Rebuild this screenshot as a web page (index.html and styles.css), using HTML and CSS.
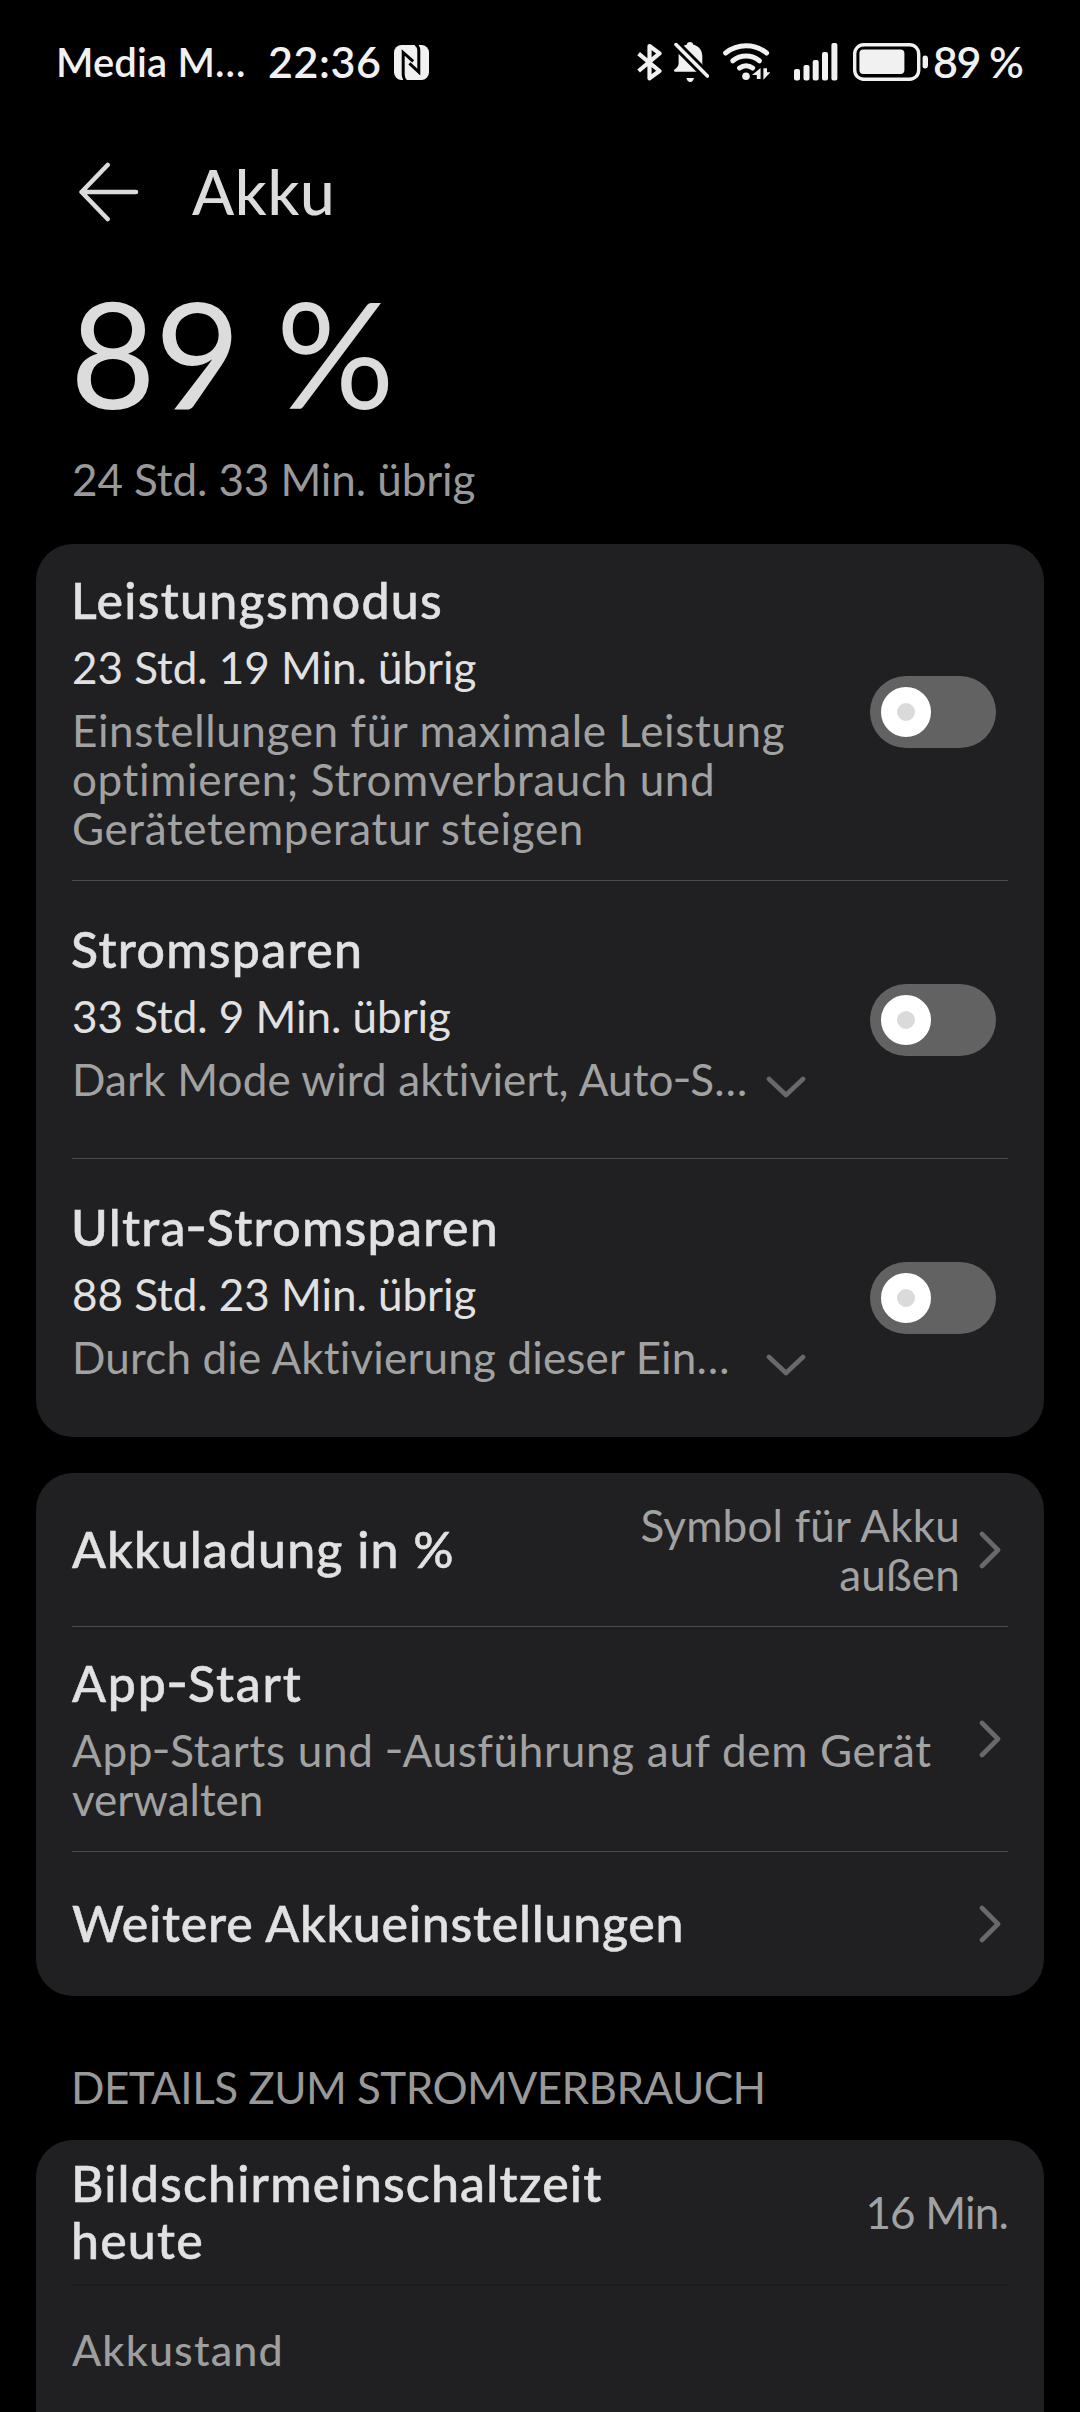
FILE: index.html
```html
<!DOCTYPE html>
<html lang="de">
<head>
<meta charset="utf-8">
<title>Akku</title>
<link rel="stylesheet" href="styles.css">
</head>
<body>
<div class="statusbar">
  <span class="carrier">Media M…</span>
  <span class="clock">22:36</span>
  <svg class="nfc" width="35" height="35" viewBox="0 0 35 35">
    <rect width="35" height="35" rx="7.5" fill="#f1f1f1"/>
    <path d="M12 36 Q9.200 33.500 9.200 29.500 V7.500 L19.200 16.400" fill="none" stroke="#000" stroke-width="3"/>
    <path d="M21.600 -1 Q24.800 1.600 24.800 5.500 V27 L15.400 18.400" fill="none" stroke="#000" stroke-width="3"/>
  </svg>
  <div class="indicators">
    <svg class="bluetooth" width="25" height="39" viewBox="0 0 25 39">
      <path d="M1.6 10.6 L22.5 28 L12.5 35.2 V3 L22.5 10.4 L1.6 28" fill="none" stroke="#f1f1f1" stroke-width="4.2" stroke-linejoin="round"/>
    </svg>
    <svg class="bell" width="35" height="41" viewBox="0 0 35 41">
      <path d="M16 0 C14 0 13 1 12.9 2.5 C7 4 4.6 8.5 4.6 14 V21.5 Q4.4 25 .4 27.6 Q-.4 29.6 1 29.8 H31 Q32.6 29.4 31.6 27.6 Q28.4 25 28.3 21.5 V14 C28.3 8.5 25 4 19.2 2.5 C19 1 18 0 16 0Z" fill="#f1f1f1"/>
      <path d="M12.4 36 H20 Q19 40 16.2 40 Q13.4 40 12.4 36Z" fill="#f1f1f1"/>
      <path d="M-3 -2.4 L37 37.6" stroke="#000" stroke-width="9.4"/>
      <path d="M2 2.6 L33.4 34" stroke="#f1f1f1" stroke-width="3.6" stroke-linecap="round"/>
    </svg>
    <svg class="wifi" width="47" height="39" viewBox="0 0 47 39">
      <g fill="none" stroke="#f1f1f1" stroke-width="5" stroke-linecap="round">
        <path d="M2.6 10 A33 33 0 0 1 43.6 10"/>
        <path d="M9.8 17.8 A21 21 0 0 1 36.4 17.8"/>
        <path d="M16.6 25 A11 11 0 0 1 29.6 25"/>
      </g>
      <circle cx="23" cy="33.2" r="3.8" fill="#f1f1f1"/>
      <path d="M37.6 25 V36 H33.8 V32 H29 Z M40.4 36.8 V25.2 H44 V29.2 H47.6 Z" fill="#f1f1f1"/>
    </svg>
    <svg class="signal" width="44" height="38" viewBox="0 0 44 38" fill="#f1f1f1">
      <rect x="0" y="26" width="6" height="11.5" rx="2"/>
      <rect x="9.5" y="22" width="6" height="15.5" rx="2"/>
      <rect x="18.7" y="17" width="6" height="20.5" rx="2"/>
      <rect x="28" y="9" width="6" height="28.5" rx="2"/>
      <rect x="37.4" y="0" width="6" height="37.5" rx="2"/>
    </svg>
    <svg class="battery" width="76" height="38" viewBox="0 0 76 38">
      <rect x="1.7" y="1.7" width="64" height="34.6" rx="9" fill="none" stroke="#f1f1f1" stroke-width="3.4"/>
      <rect x="6.4" y="6.5" width="45" height="24.5" rx="4" fill="#f1f1f1"/>
      <path d="M69.600 14.5 Q69.6 12.6 72 12.6 Q75 12.6 75 16 V22 Q75 25.6 72 25.6 Q69.6 25.6 69.6 23.6Z" fill="#f1f1f1"/>
    </svg>
    <span class="charge">89 %</span>
  </div>
</div>

<header class="header">
  <svg width="60" height="60" viewBox="0 0 60 60" fill="none" stroke="#dcdcdc" stroke-width="4.6" stroke-linecap="round" stroke-linejoin="round">
    <path d="M28.6 3 L2.6 30 L28.6 57 M2.6 30 H57"/>
  </svg>
  <h1 class="heading">Akku</h1>
</header>

<section class="summary">
  <div class="level">89 %</div>
  <div class="remaining">24 Std. 33 Min. übrig</div>
</section>

<section class="card modes">
  <div class="row mode">
    <div class="texts">
      <div class="title wide">Leistungsmodus</div>
      <div class="time">23 Std. 19 Min. übrig</div>
      <div class="desc">Einstellungen für maximale Leistung<br>optimieren; Stromverbrauch und<br>Gerätetemperatur steigen</div>
    </div>
    <div class="toggle"><div class="knob"></div></div>
  </div>
  <div class="row mode">
    <div class="texts">
      <div class="title wide">Stromsparen</div>
      <div class="time">33 Std. 9 Min. übrig</div>
      <div class="desc collapsed"><span>Dark Mode wird aktiviert, Auto<span class="dash">-</span>S…</span>
        <svg class="expand" width="40" height="22" viewBox="0 0 40 22"><path d="M3 3 L20 19 L37 3"/></svg></div>
    </div>
    <div class="toggle"><div class="knob"></div></div>
  </div>
  <div class="row mode">
    <div class="texts">
      <div class="title wide">Ultra<span class="dash">-</span>Stromsparen</div>
      <div class="time">88 Std. 23 Min. übrig</div>
      <div class="desc collapsed"><span>Durch die Aktivierung dieser Ein…</span>
        <svg class="expand" width="40" height="22" viewBox="0 0 40 22"><path d="M3 3 L20 19 L37 3"/></svg></div>
    </div>
    <div class="toggle"><div class="knob"></div></div>
  </div>
</section>

<section class="card links">
  <div class="row percent">
    <div class="title">Akkuladung in %</div>
    <div class="value">Symbol für Akku<br>außen</div>
    <svg class="chevron" width="22" height="38" viewBox="0 0 22 38"><path d="M3 3 L19 19 L3 35"/></svg>
  </div>
  <div class="row launch">
    <div class="texts">
      <div class="title">App<span class="dash">-</span>Start</div>
      <div class="desc">App<span class="dash">-</span>Starts und <span class="dash">-</span>Ausführung auf dem Gerät<br><span class="tight">verwalten</span></div>
    </div>
    <svg class="chevron" width="22" height="38" viewBox="0 0 22 38"><path d="M3 3 L19 19 L3 35"/></svg>
  </div>
  <div class="row more">
    <div class="title">Weitere Akkueinstellungen</div>
    <svg class="chevron" width="22" height="38" viewBox="0 0 22 38"><path d="M3 3 L19 19 L3 35"/></svg>
  </div>
</section>

<h2 class="section-label">DETAILS ZUM STROMVERBRAUCH</h2>

<section class="card usage">
  <div class="row screen-time">
    <div class="title">Bildschirmeinschaltzeit<br>heute</div>
    <div class="minutes">16 Min.</div>
  </div>
  <div class="row chart-label">Akkustand</div>
</section>
</body>
</html>
```
FILE: styles.css
```css
* { box-sizing: border-box; }

body {
  margin: 0;
  width: 1080px;
  height: 2412px;
  overflow: hidden;
  background: #000;
  color: #e1e1e2;
  font-family: "Lato", "Open Sans", sans-serif;
  font-size: 44px;
  line-height: 49px;
  white-space: nowrap;
}

svg { display: block; flex: none; }

/* Status bar */
.statusbar {
  display: flex;
  align-items: center;
  height: 122px;
  padding: 0 56px;
  color: #f1f1f1;
  font-size: 43px;
  font-weight: 600;
}
.carrier {
  width: 212px;
  padding-top: 2px;
  font-size: 40px;
  letter-spacing: 0.13px;
}
.clock { width: 126px; padding-top: 1px; letter-spacing: 0.56px; }
.nfc { margin-top: 3px; }
.indicators {
  display: flex;
  align-items: center;
  flex: 1;
  justify-content: flex-end;
}
.indicators svg { margin-top: 2px; }
.bell { margin-left: 12px; }
.wifi { margin-left: 14px; }
.signal { margin-left: 24px; }
.battery { margin-left: 15px; }
.charge {
  width: 91px;
  margin-left: 4px;
  padding-top: 1px;
  letter-spacing: -1.53px;
}

/* Title bar */
.header {
  display: flex;
  align-items: center;
  gap: 53px;
  height: 140px;
  padding-left: 79px;
}
.heading {
  margin: 0;
  padding-bottom: 2px;
  color: #dcdcdc;
  font-size: 62px;
  line-height: 76px;
  font-weight: 500;
  letter-spacing: 0.69px;
}

/* Charge level */
.summary { height: 282px; padding-left: 70px; }
.level {
  color: #dcdcdc;
  font-size: 148px;
  line-height: 180px;
  letter-spacing: -1.19px;
}
.remaining {
  margin-top: 13px;
  padding-left: 2px;
  color: #999;
  letter-spacing: -0.1px;
}

/* Cards */
.card {
  margin: 0 36px;
  padding: 0 36px;
  border-radius: 37px;
  background: #202022;
}
.row { display: flex; align-items: center; }
.row + .row { border-top: 1px solid #4b4b4d; }
.texts { flex: 1; }
.title {
  font-size: 50px;
  line-height: 60px;
  font-weight: 500;
  letter-spacing: 1.1px;
  -webkit-text-stroke: 0.5px currentColor;
}
.title.wide { margin-left: -1px; letter-spacing: 1.3px; }
.dash {
  display: inline-block;
  transform: scaleX(1.2) translateY(-2px);
}
.time { margin-top: 13px; letter-spacing: -0.05px; }
.desc { margin-top: 14px; color: #a2a2a3; letter-spacing: 0.63px; }
.tight { letter-spacing: 0; }

/* Power modes */
.modes { height: 893px; }
.mode { height: 278px; padding-right: 12px; }
.mode:first-child { height: 336px; }
.mode .texts { align-self: flex-start; padding-top: 38px; }
.mode:first-child .texts { padding-top: 26px; }
.collapsed { display: flex; align-items: center; letter-spacing: 0.16px; }
.collapsed > span { width: 694px; }
.expand, .chevron {
  fill: none;
  stroke: #69696a;
  stroke-width: 4.6px;
  stroke-linecap: round;
  stroke-linejoin: round;
}
.expand { margin-top: 14px; }

.toggle {
  display: flex;
  align-items: center;
  width: 126px;
  height: 72px;
  padding-left: 11px;
  border-radius: 36px;
  background: #626262;
}
.knob {
  width: 50px;
  height: 50px;
  border: 16px solid #fff;
  border-radius: 50%;
  background: #dadada;
}

/* Linked settings */
.links { height: 523px; margin-top: 36px; }
.percent { height: 153px; }
.percent .title { flex: 1; padding-bottom: 2px; }
.value {
  margin-right: 19px;
  color: #a2a2a3;
  text-align: right;
  letter-spacing: 0.2px;
}
.chevron { margin-right: 7px; }
.launch { height: 225px; }
.launch .texts { align-self: flex-start; padding-top: 26px; }
.launch .title { letter-spacing: 1.8px; }
.launch .desc { margin-top: 13px; letter-spacing: 0.7px; }
.launch .tight { letter-spacing: 0; }
.more { height: 145px; }
.more .title { flex: 1; padding-bottom: 3px; letter-spacing: 0.77px; }

/* Usage details */
.section-label {
  margin: 67px 0 28px 71px;
  color: #999;
  font-size: 44px;
  line-height: 49px;
  font-weight: 400;
  letter-spacing: -0.55px;
}
.usage { height: 320px; }
.screen-time { justify-content: space-between; height: 144px; }
.screen-time .title { margin-left: -1px; line-height: 57px; letter-spacing: 1.2px; }
.minutes { color: #a2a2a3; letter-spacing: -0.82px; }
.usage .chart-label {
  align-items: flex-start;
  height: 176px;
  padding-top: 39px;
  border-top: 2px solid #1b1b1d;
  color: #9e9e9f;
  font-size: 43px;
  font-weight: 500;
  letter-spacing: 1.15px;
}
```
